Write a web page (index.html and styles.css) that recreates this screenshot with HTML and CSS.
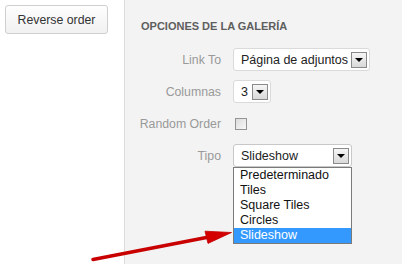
FILE: index.html
```html
<!DOCTYPE html>
<html>
<head>
<meta charset="utf-8">
<link rel="stylesheet" href="styles.css">
</head>
<body>
<div class="page">
  <div class="left">
    <button class="btn">Reverse order</button>
  </div>
  <div class="right">
    <h3 class="heading">Opciones de la galería</h3>
    <div class="form">
      <div class="label">Link To</div>
      <div class="ctl"><div class="select w-link"><span class="val">Página de adjuntos</span><span class="arrow"></span></div></div>
      <div class="label">Columnas</div>
      <div class="ctl"><div class="select w-col"><span class="val">3</span><span class="arrow"></span></div></div>
      <div class="label">Random Order</div>
      <div class="ctl"><span class="check"></span></div>
      <div class="label">Tipo</div>
      <div class="ctl">
        <div class="select w-tipo open"><span class="val">Slideshow</span><span class="arrow"></span>
          <ul class="list">
            <li>Predeterminado</li>
            <li>Tiles</li>
            <li>Square Tiles</li>
            <li>Circles</li>
            <li class="sel">Slideshow</li>
          </ul>
        </div>
      </div>
    </div>
  </div>
  <svg class="redarrow" width="402" height="264" viewBox="0 0 402 264">
    <line x1="93" y1="259.5" x2="209" y2="237" stroke="#c80000" stroke-width="3.6" stroke-linecap="round"/>
    <polygon points="231.5,232.5 205,231.2 208,243.4" fill="#d40000" stroke="#c00000" stroke-width="0.8" stroke-linejoin="round"/>
  </svg>
</div>
</body>
</html>
```
FILE: styles.css
```css
html, body {
  margin: 0;
  padding: 0;
}
body {
  width: 402px;
  height: 264px;
  overflow: hidden;
  font-family: "Liberation Sans", Arial, sans-serif;
  background: #f3f3f3;
}
.page {
  position: relative;
  display: flex;
  width: 402px;
  height: 264px;
}
.left {
  width: 125px;
  background: #fff;
  border-right: 1px solid #dcdcdc;
  padding: 5px 0 0 5px;
  box-sizing: border-box;
  flex: none;
}
.btn {
  display: block;
  width: 103px;
  height: 29px;
  margin: 0;
  padding: 0;
  border: 1px solid #cfcfcf;
  border-radius: 3px;
  background: linear-gradient(#fefefe, #f1f1f1);
  font-family: "Liberation Sans", Arial, sans-serif;
  font-size: 12.3px;
  color: #333;
  box-sizing: border-box;
}
.right {
  flex: 1;
  background: #f3f3f3;
  padding: 20px 0 0 15px;
}
.heading {
  margin: 0 0 15px 1px;
  font-size: 11px;
  line-height: 13px;
  font-weight: bold;
  text-transform: uppercase;
  color: #5e5e5e;
}
.form {
  display: grid;
  grid-template-columns: 81px auto;
  grid-auto-rows: 23px;
  column-gap: 12px;
  row-gap: 9px;
  justify-items: start;
}
.label {
  justify-self: end;
  align-self: center;
  white-space: nowrap;
  font-size: 12.3px;
  color: #999;
}
.ctl {
  display: flex;
  align-items: center;
  height: 23px;
}
.select {
  position: relative;
  display: flex;
  align-items: center;
  height: 23px;
  box-sizing: border-box;
  border: 1px solid #dadada;
  border-radius: 3px;
  background: #fff;
  padding: 0 2px 0 7px;
  font-size: 12.5px;
  color: #222;
}
.select .val {
  flex: 1;
  white-space: nowrap;
}
.w-link { width: 137px; }
.w-col { width: 38px; }
.w-tipo { width: 119px; border-color: #c8c8c8; }
.arrow {
  position: relative;
  flex: none;
  width: 16px;
  height: 16px;
  box-sizing: border-box;
  border: 1px solid #8a8a8a;
  background: linear-gradient(#f6f6f6, #d9d9d9);
}
.arrow::after {
  content: "";
  position: absolute;
  left: 3px;
  top: 5px;
  border-left: 4px solid transparent;
  border-right: 4px solid transparent;
  border-top: 4px solid #000;
}
.check {
  display: block;
  width: 12px;
  height: 12px;
  margin-left: 2px;
  box-sizing: border-box;
  border: 1px solid #949494;
  background: linear-gradient(135deg, #dcdcdc, #f8f8f8);
}
.list {
  position: absolute;
  left: -1px;
  top: 22px;
  width: 119px;
  margin: 0;
  padding: 0;
  list-style: none;
  box-sizing: border-box;
  border: 1px solid #7a7a7a;
  background: #fff;
  z-index: 2;
}
.list li {
  height: 15px;
  line-height: 15px;
  padding-left: 6px;
  font-size: 12.5px;
  color: #111;
}
.list li.sel {
  background: #3399ff;
  color: #fff;
}
.redarrow {
  position: absolute;
  left: 0;
  top: 0;
  z-index: 3;
  pointer-events: none;
}
```
